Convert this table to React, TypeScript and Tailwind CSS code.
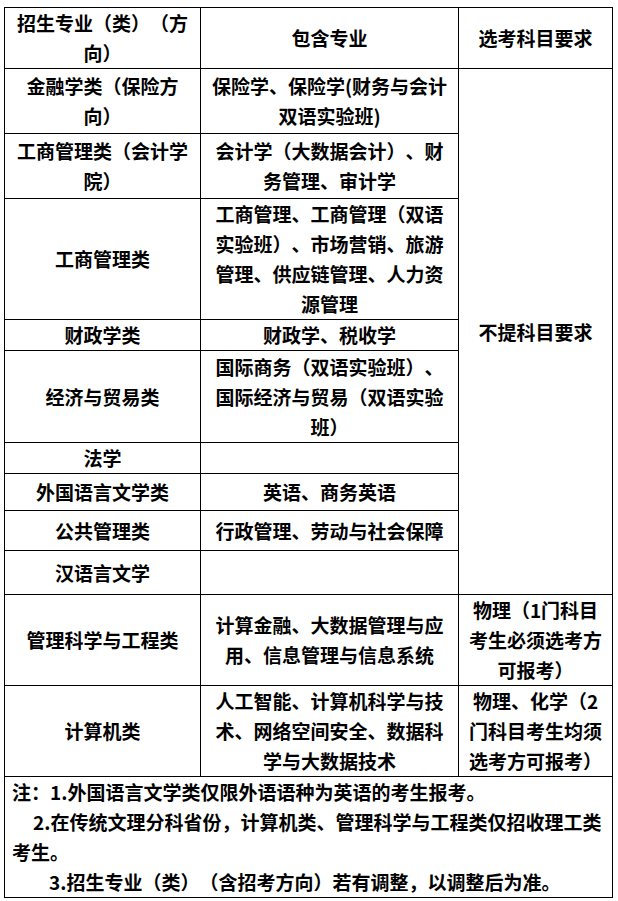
import React from 'react';

interface Row {
  name: string[];
  majors: string[];
  h: string;
}

// 招生专业与包含专业（第三列单独处理：合并行或各自要求）
const rows: Row[] = [
  { name: ['金融学类（保险方', '向）'], majors: ['保险学、保险学(财务与会计', '双语实验班)'], h: 'h-[65px]' },
  { name: ['工商管理类（会计学', '院）'], majors: ['会计学（大数据会计）、财', '务管理、审计学'], h: 'h-[65px]' },
  {
    name: ['工商管理类'],
    majors: ['工商管理、工商管理（双语', '实验班）、市场营销、旅游', '管理、供应链管理、人力资', '源管理'],
    h: 'h-[121px]',
  },
  { name: ['财政学类'], majors: ['财政学、税收学'], h: 'h-[31px]' },
  {
    name: ['经济与贸易类'],
    majors: ['国际商务（双语实验班）、', '国际经济与贸易（双语实验', '班）'],
    h: 'h-[92px]',
  },
  { name: ['法学'], majors: [], h: 'h-[30px]' },
  { name: ['外国语言文学类'], majors: ['英语、商务英语'], h: 'h-[37px]' },
  { name: ['公共管理类'], majors: ['行政管理、劳动与社会保障'], h: 'h-[40px]' },
  { name: ['汉语言文学'], majors: [], h: 'h-[44px]' },
];

const cell = 'border border-black text-center align-middle p-0 whitespace-nowrap';

const Lines = ({ lines }: { lines: string[] }) => (
  <>
    {lines.map((l, i) => (
      <React.Fragment key={i}>
        {i > 0 && <br />}
        {l}
      </React.Fragment>
    ))}
  </>
);

export default function App() {
  return (
    <div className="min-h-[901px] w-[618px] bg-white pt-[7px] pl-[4px] font-['Noto_Sans_CJK_SC','Noto_Sans',sans-serif] text-[19px] font-bold leading-[30px] text-black [text-spacing-trim:space-all]">
      <table className="w-[608px] table-fixed border-collapse">
        <colgroup>
          <col className="w-[196px]" />
          <col className="w-[258px]" />
          <col className="w-[154px]" />
        </colgroup>
        <tbody>
          <tr className="h-[61px]">
            <td className={cell}>
              <Lines lines={['招生专业（类）（方', '向）']} />
            </td>
            <td className={cell}>包含专业</td>
            <td className={cell}>选考科目要求</td>
          </tr>
          {rows.map((r, i) => (
            <tr key={i} className={r.h}>
              <td className={cell}>
                <Lines lines={r.name} />
              </td>
              <td className={cell}>
                <Lines lines={r.majors} />
              </td>
              {i === 0 && (
                <td className={cell} rowSpan={rows.length}>
                  不提科目要求
                </td>
              )}
            </tr>
          ))}
          <tr className="h-[91px]">
            <td className={cell}>管理科学与工程类</td>
            <td className={cell}>
              <Lines lines={['计算金融、大数据管理与应', '用、信息管理与信息系统']} />
            </td>
            <td className={cell}>
              <Lines lines={['物理（1门科目', '考生必须选考方', '可报考）']} />
            </td>
          </tr>
          <tr className="h-[91px]">
            <td className={cell}>计算机类</td>
            <td className={cell}>
              <Lines lines={['人工智能、计算机科学与技', '术、网络空间安全、数据科', '学与大数据技术']} />
            </td>
            <td className={cell}>
              <Lines lines={['物理、化学（2', '门科目考生均须', '选考方可报考）']} />
            </td>
          </tr>
          <tr className="h-[121px]">
            <td colSpan={3} className="border border-black px-[7px] py-0 text-left align-middle whitespace-nowrap">
              <p>注：1.外国语言文学类仅限外语语种为英语的考生报考。</p>
              <p className="indent-[21px]">
                2.在传统文理分科省份，计算机类、管理科学与工程类仅招收理工类
                <br />
                考生。
              </p>
              <p className="indent-[37px]">3.招生专业（类）（含招考方向）若有调整，以调整后为准。</p>
            </td>
          </tr>
        </tbody>
      </table>
    </div>
  );
}
